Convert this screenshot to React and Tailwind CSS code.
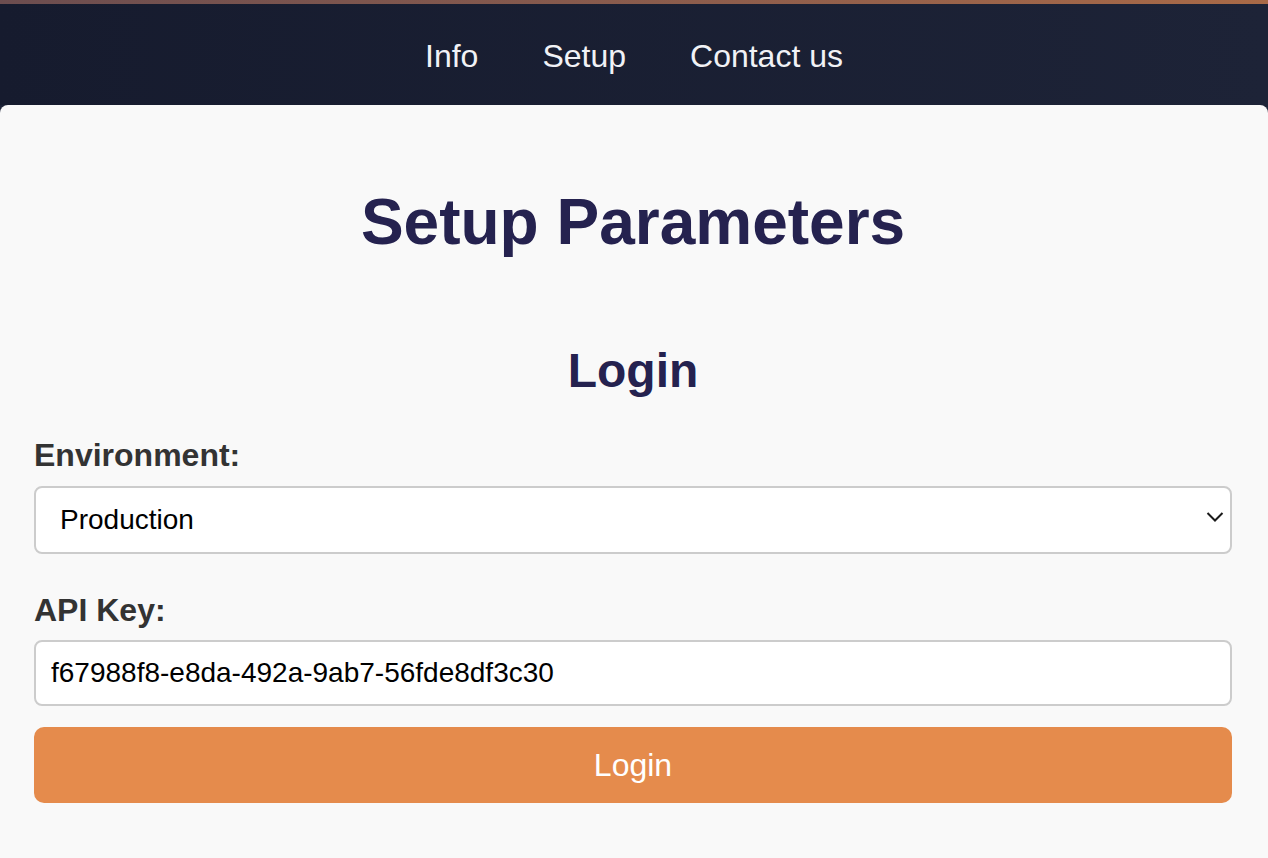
import React from 'react'

const font = { fontFamily: '"Liberation Sans", Arial, Helvetica, sans-serif' }

function Header() {
  return (
    <header>
      <div className="h-[4px] bg-gradient-to-r from-[#6c4d4f] to-[#a96a47]" />
      <nav className="h-[101px] bg-gradient-to-r from-[#161b2e] to-[#1d2337] flex items-center justify-center gap-[64px] pt-[2px]">
        <a href="#" className="text-[32px] leading-none text-[#f1f2f6]">Info</a>
        <a href="#" className="text-[32px] leading-none text-[#f1f2f6]">Setup</a>
        <a href="#" className="text-[32px] leading-none text-[#f1f2f6]">Contact us</a>
      </nav>
    </header>
  )
}

export default function App() {
  return (
    <div className="min-h-screen bg-[#1d2337]" style={font}>
      <Header />
      <main className="bg-[#f9f9f9] rounded-t-[8px] min-h-[753px] pl-[34px] pr-[36px] flex flex-col">
        <h1 className="mt-[80px] text-center text-[64px] leading-[74px] font-bold text-[#25224f]">
          Setup Parameters
        </h1>
        <h2 className="mt-[84px] text-center text-[48px] leading-[56px] font-bold text-[#25224f]">
          Login
        </h2>

        <label className="mt-[38px] text-[32px] leading-[37px] font-bold text-[#333333]">Environment:</label>
        <div className="relative mt-[12px]">
          <select
            defaultValue="production"
            className="appearance-none w-full h-[68px] bg-white border-2 border-[#cccccc] rounded-[8px] pl-[24px] pr-[50px] text-[28px] text-black outline-none"
          >
            <option value="production">Production</option>
            <option value="sandbox">Sandbox</option>
          </select>
          <svg
            className="absolute right-[8px] top-[25px] pointer-events-none"
            width="18" height="12" viewBox="0 0 18 12" fill="none"
          >
            <path d="M1.5 2 L9 9.5 L16.5 2" stroke="#1a1a1a" strokeWidth="2" />
          </svg>
        </div>

        <label className="mt-[38px] text-[32px] leading-[37px] font-bold text-[#333333]">API Key:</label>
        <input
          type="text"
          defaultValue="f67988f8-e8da-492a-9ab7-56fde8df3c30"
          className="mt-[11px] w-full h-[66px] bg-white border-2 border-[#cccccc] rounded-[8px] px-[15px] text-[28px] text-black outline-none"
        />

        <button className="mt-[21px] w-full h-[76px] bg-[#e58b4c] rounded-[10px] text-white text-[32px]">
          Login
        </button>
      </main>
    </div>
  )
}
